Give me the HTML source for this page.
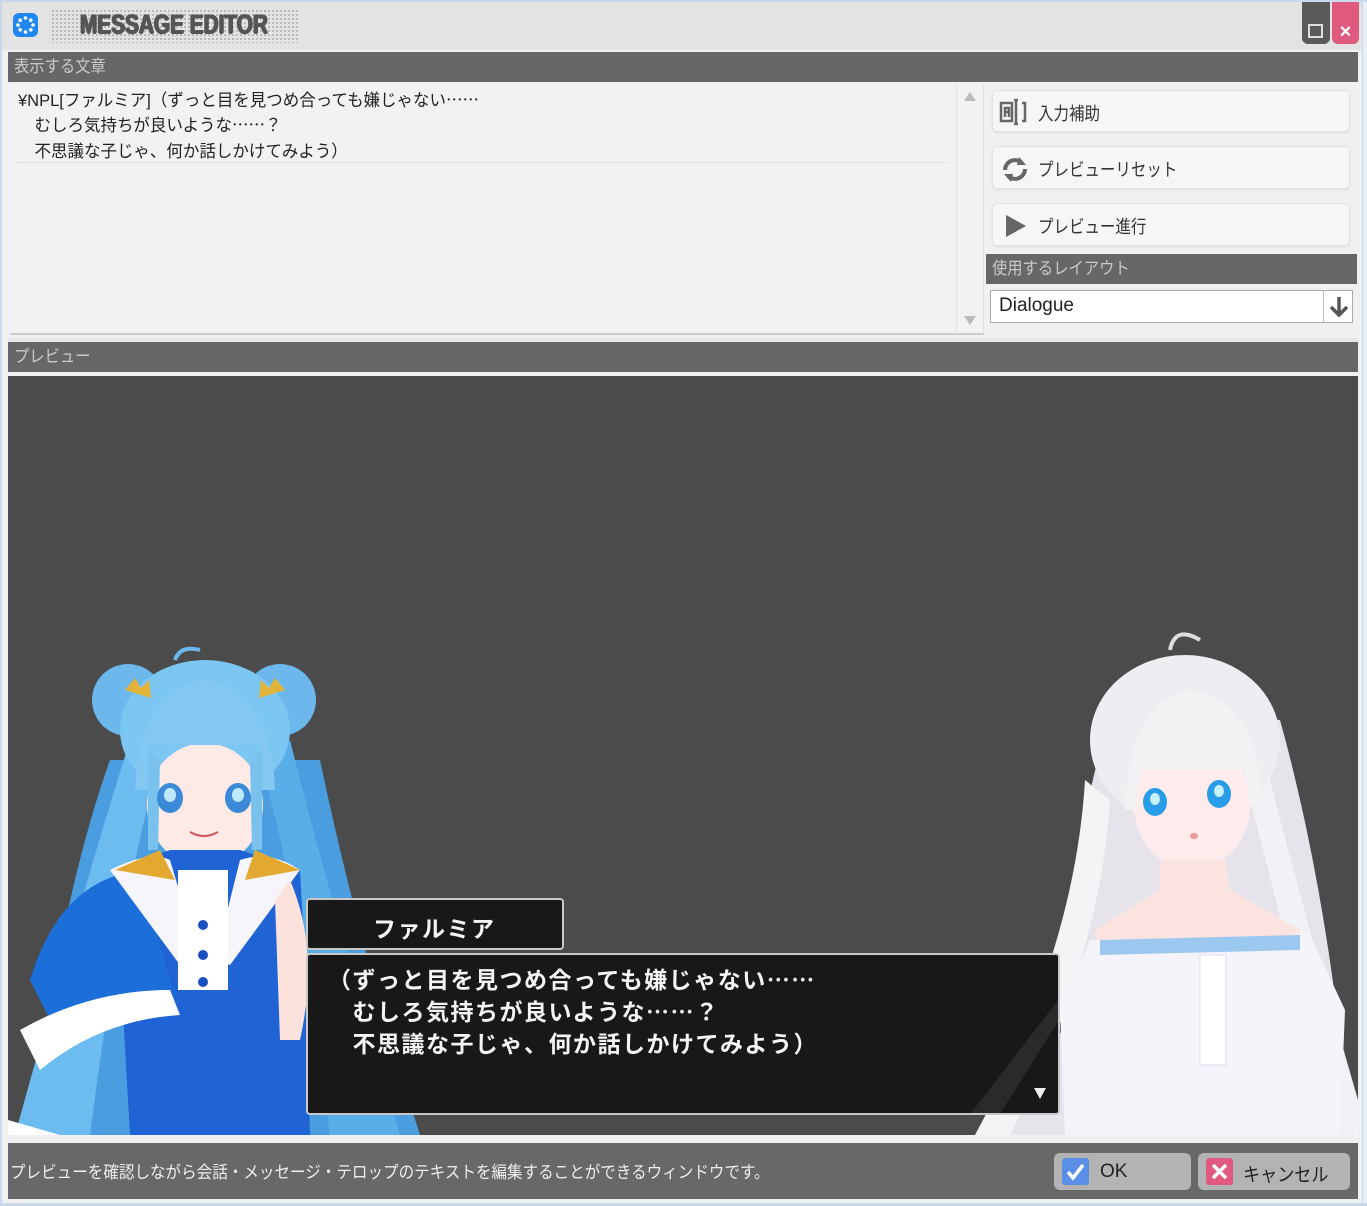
<!DOCTYPE html>
<html><head><meta charset="utf-8">
<style>
*{box-sizing:border-box;margin:0;padding:0}
body{width:1367px;height:1206px;background:#f0f0f0;position:relative;overflow:hidden;font-family:"Liberation Sans","Noto Sans CJK JP",sans-serif;}
.abs{position:absolute}
.hdr{background:#676767;color:#c9c9c9;font-size:17px;line-height:30px;padding-left:6px}
.hdr span{display:inline-block;transform:scaleX(0.9);transform-origin:left}
.btn{position:absolute;left:992px;width:358px;background:#f6f6f6;border:1px solid #e2e2e2;border-radius:5px;box-shadow:0 1px 2px #ddd;font-size:18px;color:#333;}
.btn span{position:absolute;left:45px;top:9px;transform:scaleX(0.86);transform-origin:left;white-space:nowrap}
.e{font-family:"Noto Sans CJK JP",sans-serif;line-height:0}
.ln{position:absolute;white-space:pre;line-height:20px;height:20px}
.msg{color:#f4f4f4;font-size:23px;font-weight:bold;letter-spacing:1.5px}
</style></head><body>
<div class="abs" style="left:0;top:0;width:2px;height:1206px;background:#c9d8ea"></div>
<div class="abs" style="left:1362px;top:0;width:5px;height:1206px;background:#e8eef5;border-left:1px solid #c9d8ea"></div>
<div class="abs" style="left:0;top:0;width:1367px;height:2px;background:#c9d8ea"></div>
<div class="abs" style="left:0;top:1203px;width:1367px;height:3px;background:#c9d8ea"></div>
<div class="abs" style="left:2px;top:2px;width:1360px;height:48px;background:#e3e3e3"></div>
<div class="abs" style="left:13px;top:13px;width:25px;height:24px;border-radius:6px;background:#1e88f0"></div>
<svg class="abs" style="left:13px;top:13px" width="25" height="24"><g fill="#fff">
<circle cx="12.5" cy="5" r="1.8"/><circle cx="17.8" cy="7.2" r="1.8"/><circle cx="20" cy="12" r="1.8"/><circle cx="17.8" cy="16.8" r="1.8"/><circle cx="12.5" cy="19" r="1.8"/><circle cx="7.2" cy="16.8" r="1.8"/><circle cx="5" cy="12" r="1.8"/><circle cx="7.2" cy="7.2" r="1.8"/></g></svg>
<div class="abs" style="left:51px;top:9px;width:249px;height:34px;background-image:radial-gradient(#b8b8b8 1px,transparent 1.3px);background-size:4px 4px"></div>
<div class="abs" style="left:80px;top:9px;font-size:27px;font-weight:bold;color:#555;transform:scaleX(0.77);transform-origin:left;text-shadow:1px 0 #555,-1px 0 #555,0 1px #555;white-space:nowrap">MESSAGE EDITOR</div>
<div class="abs" style="left:1302px;top:2px;width:28px;height:42px;background:#5a5a5a;border-radius:0 0 6px 6px"></div>
<div class="abs" style="left:1308px;top:24px;width:15px;height:14px;border:2px solid #ddd"></div>
<div class="abs" style="left:1332px;top:2px;width:27px;height:42px;background:#e05a80;border-radius:0 0 6px 6px;color:#fff;font-size:20px;font-weight:bold;text-align:center;line-height:60px">×</div>
<div class="abs hdr" style="left:8px;top:52px;width:1350px;height:30px"><span>表示する文章</span></div>
<div class="abs" style="left:10px;top:85px;width:974px;height:250px;background:#f2f2f2;border-right:1px solid #ddd;border-bottom:2px solid #ccc"></div>
<div class="abs" style="left:956px;top:85px;width:1px;height:249px;background:#e2e2e2"></div>
<div class="abs" style="left:964px;top:92px;width:0;height:0;border-left:6px solid transparent;border-right:6px solid transparent;border-bottom:9px solid #bbb"></div>
<div class="abs" style="left:964px;top:316px;width:0;height:0;border-left:6px solid transparent;border-right:6px solid transparent;border-top:9px solid #bbb"></div>
<div style="font-size:17px;color:#222">
<div class="ln" style="left:18px;top:91px;transform:scaleX(0.97);transform-origin:left">¥NPL[ファルミア]（ずっと目を見つめ合っても嫌じゃない<span class="e">……</span></div>
<div class="ln" style="left:18px;top:116px;transform:scaleX(0.97);transform-origin:left">　むしろ気持ちが良いような<span class="e">……</span>？</div>
<div class="ln" style="left:18px;top:142px;transform:scaleX(0.97);transform-origin:left">　不思議な子じゃ、何か話しかけてみよう）</div>
</div>
<div class="abs" style="left:18px;top:162px;width:930px;border-top:1px dotted #ccc"></div>
<div class="btn" style="top:90px;height:42px"><svg class="abs" style="left:6px;top:6px" width="32" height="30"><g fill="none" stroke="#666" stroke-width="2.5"><rect x="2" y="6" width="11" height="18"/><path d="M6 20v-9h4v9M6 15h4"/><path d="M15 3h4M17 3v24M15 27h4M23 6h3v18h-3"/></g></svg><span>入力補助</span></div>
<div class="btn" style="top:146px;height:43px"><svg class="abs" style="left:6px;top:7px" width="32" height="30"><g fill="none" stroke="#666" stroke-width="4"><path d="M6 16a10 10 0 0 1 17-7"/><path d="M26 15a10 10 0 0 1-17 7"/></g><path d="M20 3l7 8h-9z" fill="#666"/><path d="M12 28l-7-8h9z" fill="#666"/></svg><span>プレビューリセット</span></div>
<div class="btn" style="top:203px;height:43px"><svg class="abs" style="left:10px;top:9px" width="26" height="26"><path d="M3 2l20 11-20 11z" fill="#666"/></svg><span>プレビュー進行</span></div>
<div class="abs hdr" style="left:986px;top:254px;width:371px;height:30px;font-size:17px"><span>使用するレイアウト</span></div>
<div class="abs" style="left:990px;top:290px;width:363px;height:33px;background:#fff;border:1px solid #aaa"></div>
<div class="abs" style="left:999px;top:295px;font-size:19px;color:#222">Dialogue</div>
<div class="abs" style="left:1323px;top:290px;width:1px;height:33px;background:#bbb"></div>
<svg class="abs" style="left:1326px;top:293px" width="26" height="28"><g stroke="#555" stroke-width="3.5" fill="none"><path d="M13 4v18M5 14l8 8 8-8"/></g></svg>
<div class="abs" style="left:8px;top:338px;width:1350px;height:4px;background:#e6e6e6"></div>
<div class="abs hdr" style="left:8px;top:342px;width:1350px;height:30px"><span>プレビュー</span></div>
<div class="abs" style="left:8px;top:376px;width:1350px;height:759px;background:#4b4b4b;overflow:hidden">
<svg width="1350" height="759" style="position:absolute;left:0;top:0">
<g transform="translate(-8,-376)">
<path d="M110 760 Q60 900 30 1135 L420 1135 Q360 950 320 760 Z" fill="#4a9ee0"/>
<path d="M130 740 Q80 900 15 1135 L90 1135 Q120 900 160 760Z" fill="#6cbcf0"/>
<path d="M290 740 Q330 900 400 1135 L330 1135 Q300 900 260 760Z" fill="#5aaee8"/>
<circle cx="128" cy="700" r="36" fill="#6cb8ec"/>
<circle cx="280" cy="700" r="36" fill="#6cb8ec"/>
<path d="M175 660 q5 -15 25 -10" stroke="#6cb8ec" stroke-width="4" fill="none"/>
<ellipse cx="205" cy="730" rx="85" ry="70" fill="#7cc6f2"/>
<ellipse cx="205" cy="805" rx="58" ry="62" fill="#fde9e6"/>
<path d="M135 790 Q140 690 205 680 Q272 690 275 790 L262 790 L258 745 L150 745 L148 790Z" fill="#82c8f2"/>
<path d="M148 750 L148 850 L158 850 L160 760Z M262 750 L262 850 L252 850 L250 760Z" fill="#7ac2ee"/>
<ellipse cx="170" cy="798" rx="13" ry="15" fill="#3a8ad8"/><ellipse cx="238" cy="798" rx="13" ry="15" fill="#3a8ad8"/>
<ellipse cx="170" cy="795" rx="6" ry="7" fill="#bfe8ff"/><ellipse cx="238" cy="795" rx="6" ry="7" fill="#bfe8ff"/>
<path d="M190 832 q14 8 28 0" stroke="#c55" stroke-width="2" fill="none"/>
<path d="M125 690 l10 -12 l6 10 l8 -8 l2 18z M285 690 l-10 -12 l-6 10 l-8 -8 l-2 18z" fill="#e4b43a"/>
<path d="M115 870 L170 850 L240 850 L300 870 L305 960 L310 1135 L130 1135 L120 960Z" fill="#1f63d4"/>
<path d="M30 980 Q60 880 140 870 L175 1000 Q120 1010 60 1040Z" fill="#1c6fd8"/>
<path d="M20 1030 Q90 990 170 990 L180 1015 Q100 1020 40 1070 Z" fill="#fff"/>
<path d="M110 870 Q150 850 170 860 L200 960 L180 965Z M300 870 Q270 850 240 860 L215 960 L230 965Z" fill="#f5f5fa"/>
<path d="M115 870 L160 850 L175 880Z M300 870 L255 850 L245 880Z" fill="#e2a830"/>
<rect x="178" y="870" width="50" height="120" fill="#fff"/>
<circle cx="203" cy="925" r="5" fill="#1a4fbf"/><circle cx="203" cy="955" r="5" fill="#1a4fbf"/><circle cx="203" cy="982" r="5" fill="#1a4fbf"/>
<path d="M290 880 Q320 950 300 1040 L280 1040 L275 900Z" fill="#fbe2dc"/>
<path d="M8 1120 L60 1135 L8 1135Z" fill="#fff"/>
<path d="M1120 700 Q1070 800 1080 1000 L1000 1135 L1350 1135 Q1330 900 1280 720 Z" fill="#e6e4ea"/>
<path d="M1085 780 Q1075 950 975 1135 L1010 1135 Q1100 960 1110 800Z" fill="#f4f3f6"/>
<path d="M1265 760 Q1300 900 1358 1100 L1358 1135 L1330 1135 Q1290 950 1250 800Z" fill="#f2f1f5"/>
<ellipse cx="1185" cy="740" rx="95" ry="85" fill="#eeedf1"/>
<path d="M1170 650 q5 -25 30 -10" stroke="#ddd" stroke-width="4" fill="none"/>
<ellipse cx="1192" cy="805" rx="58" ry="65" fill="#fdeceb"/>
<path d="M1125 810 Q1130 700 1190 690 Q1260 700 1262 810 L1250 805 L1245 770 L1140 770 L1135 810Z" fill="#f2f1f4"/>
<ellipse cx="1155" cy="802" rx="12" ry="14" fill="#2a9de8"/><ellipse cx="1219" cy="794" rx="12" ry="14" fill="#2a9de8"/>
<ellipse cx="1155" cy="799" rx="5" ry="6" fill="#c8f0ff"/><ellipse cx="1219" cy="791" rx="5" ry="6" fill="#c8f0ff"/>
<ellipse cx="1194" cy="836" rx="4" ry="3" fill="#e89a9a"/>
<path d="M1160 860 L1225 860 L1230 890 L1300 930 L1290 960 L1100 960 L1095 930 L1160 890Z" fill="#fbe3df"/>
<path d="M1090 940 L1310 935 L1345 1010 L1340 1135 L1065 1135 L1060 1010Z" fill="#f4f4fa"/>
<path d="M1100 940 L1300 935 L1300 950 L1100 955Z" fill="#9cc8f0"/>
<rect x="1200" y="955" width="26" height="110" fill="#fff" stroke="#dde" />
</g></svg>
</div>
<div class="abs" style="left:306px;top:898px;width:258px;height:52px;background:#181818;border:2px solid #c8c8c8;border-radius:4px"></div>
<div class="abs msg" style="left:373px;top:910px;font-size:23px">ファルミア</div>
<div class="abs" style="left:306px;top:953px;width:754px;height:162px;background:#181818;border:2px solid #c8c8c8;border-radius:4px;overflow:hidden">
<svg width="754" height="162" style="position:absolute;left:0;top:0"><path d="M660 162 L754 40 L754 60 L690 162Z" fill="#2a2a2a"/></svg>
</div>
<div class="msg">
<div class="ln" style="left:328px;top:967px;height:26px;line-height:26px">（ずっと目を見つめ合っても嫌じゃない<span class="e">……</span></div>
<div class="ln" style="left:328px;top:999px;height:26px;line-height:26px">　むしろ気持ちが良いような<span class="e">……</span>？</div>
<div class="ln" style="left:328px;top:1031px;height:26px;line-height:26px">　不思議な子じゃ、何か話しかけてみよう）</div>
</div>
<div class="abs" style="left:1034px;top:1088px;width:0;height:0;border-left:6px solid transparent;border-right:6px solid transparent;border-top:11px solid #eee"></div>
<div class="abs" style="left:8px;top:1143px;width:1350px;height:56px;background:#686868"></div>
<div class="abs" style="left:10px;top:1158px;font-size:17px;color:#eee;white-space:nowrap;transform:scaleX(0.915);transform-origin:left">プレビューを確認しながら会話・メッセージ・テロップのテキストを編集することができるウィンドウです。</div>
<div class="abs" style="left:1054px;top:1153px;width:137px;height:37px;background:#b3b3b3;border-radius:6px"></div>
<div class="abs" style="left:1062px;top:1158px;width:27px;height:27px;background:#5b8ee6;border-radius:3px"></div>
<svg class="abs" style="left:1062px;top:1158px" width="27" height="27"><path d="M6 14l5 6 10-13" stroke="#fff" stroke-width="3.5" fill="none"/></svg>
<div class="abs" style="left:1100px;top:1161px;font-size:19px;color:#222">OK</div>
<div class="abs" style="left:1198px;top:1153px;width:152px;height:37px;background:#b3b3b3;border-radius:6px"></div>
<div class="abs" style="left:1206px;top:1158px;width:27px;height:27px;background:#e05a80;border-radius:3px"></div>
<svg class="abs" style="left:1206px;top:1158px" width="27" height="27"><path d="M7 7l13 13M20 7l-13 13" stroke="#fff" stroke-width="3.5"/></svg>
<div class="abs" style="left:1243px;top:1160px;font-size:19px;color:#222;transform:scaleX(0.9);transform-origin:left">キャンセル</div>
</body></html>
